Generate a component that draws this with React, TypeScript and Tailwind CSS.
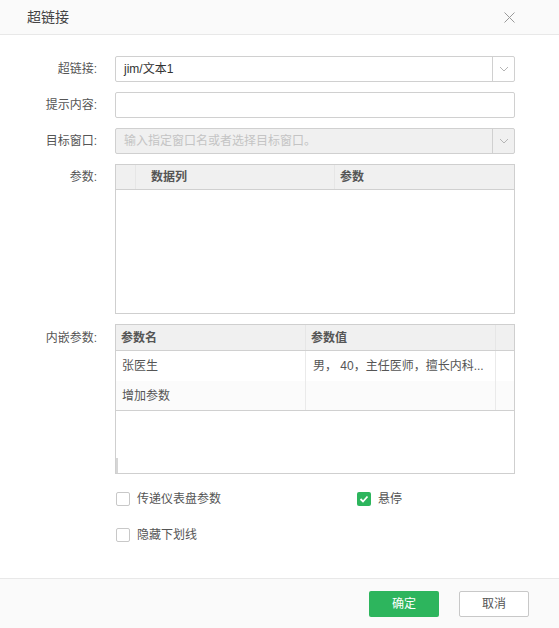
import React from "react";

const font = { fontFamily: '"Liberation Sans", "Noto Sans CJK SC", sans-serif' };

function Chevron() {
  return (
    <svg width="10" height="6" viewBox="0 0 10 6" fill="none">
      <path d="M1 1l4 4 4-4" stroke="#b5b5b5" strokeWidth="1" />
    </svg>
  );
}

function Label({ children }: { children: React.ReactNode }) {
  return <div className="w-[97px] shrink-0 text-right text-[12px] text-[#555] pr-0">{children}</div>;
}

function Checkbox({ checked, label }: { checked?: boolean; label: string }) {
  return (
    <div className="flex items-center gap-[7px]">
      {checked ? (
        <div className="w-[14px] h-[14px] rounded-[2px] bg-[#2db55d] flex items-center justify-center">
          <svg width="10" height="8" viewBox="0 0 10 8" fill="none">
            <path d="M1.5 4l2.5 2.5 4.5-5" stroke="#fff" strokeWidth="1.8" />
          </svg>
        </div>
      ) : (
        <div className="w-[14px] h-[14px] rounded-[2px] border border-[#c8c8c8] bg-white" />
      )}
      <span className="text-[12px] text-[#555]">{label}</span>
    </div>
  );
}

export default function App() {
  return (
    <div className="w-[559px] h-[628px] bg-white flex flex-col" style={font}>
      <div className="h-[35px] shrink-0 bg-[#fafafa] border-b border-[#e8e8e8] flex items-center justify-between pl-[27px] pr-[44px]">
        <span className="text-[14px] text-[#444]">超链接</span>
        <svg width="11" height="11" viewBox="0 0 11 11" fill="none">
          <path d="M0.5 0.5l10 10M10.5 0.5l-10 10" stroke="#999" strokeWidth="1" />
        </svg>
      </div>

      <div className="flex-1 flex flex-col pt-[21px]">
        <div className="flex items-center gap-[18px] h-[26px]">
          <Label>超链接:</Label>
          <div className="w-[400px] h-[26px] border border-[#d0d0d0] rounded-[2px] flex">
            <div className="flex-1 flex items-center pl-[8px] text-[12px] text-[#333]">jim/文本1</div>
            <div className="w-[22px] border-l border-[#d0d0d0] flex items-center justify-center">
              <Chevron />
            </div>
          </div>
        </div>

        <div className="flex items-center gap-[18px] h-[26px] mt-[10px]">
          <Label>提示内容:</Label>
          <div className="w-[400px] h-[26px] border border-[#d0d0d0] rounded-[2px]" />
        </div>

        <div className="flex items-center gap-[18px] h-[26px] mt-[10px]">
          <Label>目标窗口:</Label>
          <div className="w-[400px] h-[26px] border border-[#d0d0d0] rounded-[2px] flex bg-[#f0f0f0]">
            <div className="flex-1 flex items-center pl-[8px] text-[12px] text-[#c4c4c4]">输入指定窗口名或者选择目标窗口。</div>
            <div className="w-[22px] border-l border-[#d0d0d0] flex items-center justify-center">
              <Chevron />
            </div>
          </div>
        </div>

        <div className="flex items-start gap-[18px] mt-[10px]">
          <div className="pt-[4px]"><Label>参数:</Label></div>
          <div className="w-[400px] h-[150px] border border-[#cfcfcf] flex flex-col">
            <div className="h-[25px] bg-[#f0f0f0] border-b border-[#d0d0d0] flex text-[12px] font-bold text-[#555]">
              <div className="w-[20px] border-r border-[#e6e6e6]" />
              <div className="w-[199px] border-r border-[#e6e6e6] flex items-center pl-[15px]">数据列</div>
              <div className="flex-1 flex items-center pl-[5px]">参数</div>
            </div>
          </div>
        </div>

        <div className="flex items-start gap-[18px] mt-[10px]">
          <div className="pt-[5px]"><Label>内嵌参数:</Label></div>
          <div className="w-[400px] h-[150px] border border-[#cfcfcf] flex flex-col relative">
            <div className="h-[26px] bg-[#f0f0f0] border-b border-[#d0d0d0] flex text-[12px] font-bold text-[#555]">
              <div className="w-[190px] border-r border-[#e6e6e6] flex items-center pl-[5px]">参数名</div>
              <div className="w-[190px] border-r border-[#e6e6e6] flex items-center pl-[5px]">参数值</div>
              <div className="flex-1" />
            </div>
            <div className="h-[30px] flex text-[12px] text-[#555]">
              <div className="w-[190px] border-r border-[#eaeaea] flex items-center pl-[6px]">张医生</div>
              <div className="w-[190px] border-r border-[#eaeaea] flex items-center pl-[7px] whitespace-nowrap overflow-hidden">男， 40，主任医师，擅长内科...</div>
              <div className="flex-1" />
            </div>
            <div className="h-[30px] flex text-[12px] text-[#555] bg-[#fbfbfb] border-b border-[#d0d0d0]">
              <div className="w-[190px] border-r border-[#eaeaea] flex items-center pl-[6px]">增加参数</div>
              <div className="w-[190px] border-r border-[#eaeaea]" />
              <div className="flex-1" />
            </div>
            <div className="absolute left-0 bottom-0 w-[2px] h-[15px] bg-[#d6d6d6]" />
          </div>
        </div>

        <div className="flex flex-col pl-[116px] mt-[16px]">
          <div className="flex">
            <div className="w-[241px]"><Checkbox label="传递仪表盘参数" /></div>
            <Checkbox checked label="悬停" />
          </div>
          <div className="mt-[18px]"><Checkbox label="隐藏下划线" /></div>
        </div>
      </div>

      <div className="h-[50px] shrink-0 bg-[#fafafa] border-t border-[#e8e8e8] flex items-start justify-end gap-[20px] pr-[30px] pt-[12px]">
        <button className="w-[70px] h-[26px] rounded-[2px] bg-[#2db55d] text-white text-[12px]">确定</button>
        <button className="w-[70px] h-[26px] rounded-[2px] bg-white border border-[#c8c8c8] text-[#555] text-[12px]">取消</button>
      </div>
    </div>
  );
}
